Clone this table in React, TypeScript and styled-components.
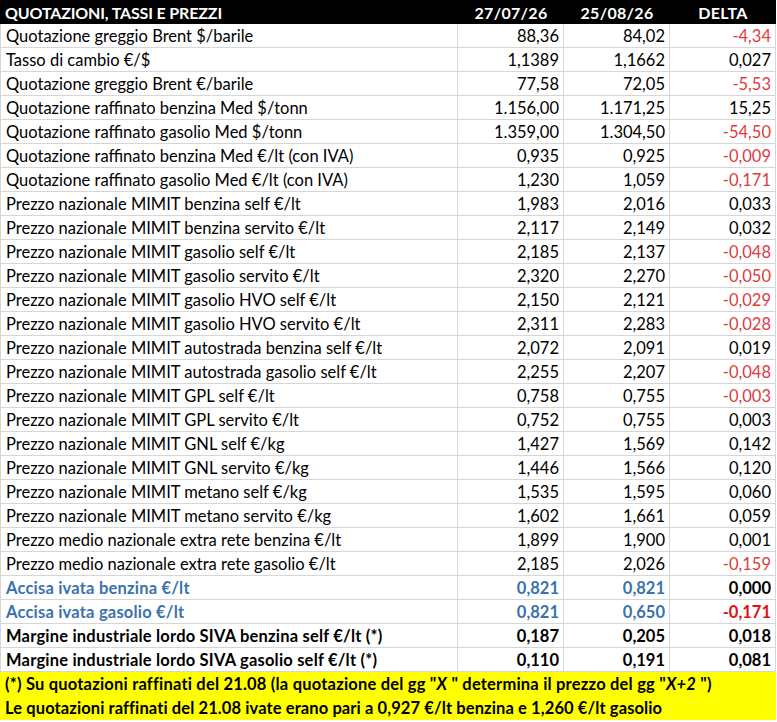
import React from "react"
import styled, { createGlobalStyle } from "styled-components"

const GlobalStyle = createGlobalStyle`
  body {
    margin: 0;
    background: #ffffff;
    font-family: 'Lato', 'Liberation Sans', sans-serif;
  }
`

type Tone = "normal" | "blue" | "bold"
type Row = { label: string, a: string, b: string, d: string, tone?: Tone }

const rows: Row[] = [
  { label: "Quotazione greggio Brent $/barile", a: "88,36", b: "84,02", d: "-4,34" },
  { label: "Tasso di cambio €/$", a: "1,1389", b: "1,1662", d: "0,027" },
  { label: "Quotazione greggio Brent €/barile", a: "77,58", b: "72,05", d: "-5,53" },
  { label: "Quotazione raffinato benzina Med $/tonn", a: "1.156,00", b: "1.171,25", d: "15,25" },
  { label: "Quotazione raffinato gasolio Med $/tonn", a: "1.359,00", b: "1.304,50", d: "-54,50" },
  { label: "Quotazione raffinato benzina Med €/lt (con IVA)", a: "0,935", b: "0,925", d: "-0,009" },
  { label: "Quotazione raffinato gasolio Med €/lt (con IVA)", a: "1,230", b: "1,059", d: "-0,171" },
  { label: "Prezzo nazionale MIMIT benzina self €/lt", a: "1,983", b: "2,016", d: "0,033" },
  { label: "Prezzo nazionale MIMIT benzina servito €/lt", a: "2,117", b: "2,149", d: "0,032" },
  { label: "Prezzo nazionale MIMIT gasolio self €/lt", a: "2,185", b: "2,137", d: "-0,048" },
  { label: "Prezzo nazionale MIMIT gasolio servito €/lt", a: "2,320", b: "2,270", d: "-0,050" },
  { label: "Prezzo nazionale MIMIT gasolio HVO self €/lt", a: "2,150", b: "2,121", d: "-0,029" },
  { label: "Prezzo nazionale MIMIT gasolio HVO servito €/lt", a: "2,311", b: "2,283", d: "-0,028" },
  { label: "Prezzo nazionale MIMIT autostrada benzina self €/lt", a: "2,072", b: "2,091", d: "0,019" },
  { label: "Prezzo nazionale MIMIT autostrada gasolio self €/lt", a: "2,255", b: "2,207", d: "-0,048" },
  { label: "Prezzo nazionale MIMIT GPL self €/lt", a: "0,758", b: "0,755", d: "-0,003" },
  { label: "Prezzo nazionale MIMIT GPL servito €/lt", a: "0,752", b: "0,755", d: "0,003" },
  { label: "Prezzo nazionale MIMIT GNL self €/kg", a: "1,427", b: "1,569", d: "0,142" },
  { label: "Prezzo nazionale MIMIT GNL servito €/kg", a: "1,446", b: "1,566", d: "0,120" },
  { label: "Prezzo nazionale MIMIT metano self €/kg", a: "1,535", b: "1,595", d: "0,060" },
  { label: "Prezzo nazionale MIMIT metano servito €/kg", a: "1,602", b: "1,661", d: "0,059" },
  { label: "Prezzo medio nazionale extra rete benzina €/lt", a: "1,899", b: "1,900", d: "0,001" },
  { label: "Prezzo medio nazionale extra rete gasolio €/lt", a: "2,185", b: "2,026", d: "-0,159" },
  { label: "Accisa ivata benzina €/lt", a: "0,821", b: "0,821", d: "0,000", tone: "blue" },
  { label: "Accisa ivata gasolio €/lt", a: "0,821", b: "0,650", d: "-0,171", tone: "blue" },
  { label: "Margine industriale lordo SIVA benzina self €/lt (*)", a: "0,187", b: "0,205", d: "0,018", tone: "bold" },
  { label: "Margine industriale lordo SIVA gasolio self €/lt (*)", a: "0,110", b: "0,191", d: "0,081", tone: "bold" },
]

function App() {
  return (
    <Sheet>
      <GlobalStyle />
      <HeadCell>QUOTAZIONI, TASSI E PREZZI</HeadCell>
      <HeadCell $center>27/07/26</HeadCell>
      <HeadCell $center>25/08/26</HeadCell>
      <HeadCell $center>DELTA</HeadCell>
      {rows.map((row, index) => {
        const tone = row.tone || "normal"
        const negative = row.d.startsWith("-")
        return (
          <React.Fragment key={index}>
            <Cell $tone={tone} $first>{row.label}</Cell>
            <Cell $tone={tone} $num>{row.a}</Cell>
            <Cell $tone={tone} $num>{row.b}</Cell>
            <DeltaCell $tone={tone} $num $negative={negative}>{row.d}</DeltaCell>
          </React.Fragment>
        )
      })}
      <Note $spacing={0.2}>
        (*) Su quotazioni raffinati del 21.08 (la quotazione del gg "<Em>X</Em> " determina il prezzo del gg "<Em>X+2</Em> ")
      </Note>
      <Note $spacing={0.1}>Le quotazioni raffinati del 21.08 ivate erano pari a 0,927 €/lt benzina e 1,260 €/lt gasolio</Note>
    </Sheet>
  )
}

const Sheet = styled.div`
  display: grid;
  grid-template-columns: 458px 106px 106px 106px;
  grid-auto-rows: 24px;
  width: 776px;
  font-size: 16.5px;
  color: #000000;
`

const HeadCell = styled.div<{ $center?: boolean }>`
  background: #000000;
  color: #ffffff;
  font-weight: 700;
  font-size: 16px;
  letter-spacing: ${(p) => (p.$center ? "0.3px" : "-0.15px")};
  display: flex;
  align-items: center;
  justify-content: ${(p) => (p.$center ? "center" : "flex-start")};
  padding: 0 5px;
  white-space: nowrap;
`

const Cell = styled.div<{ $tone: Tone, $num?: boolean, $first?: boolean }>`
  display: flex;
  align-items: center;
  justify-content: ${(p) => (p.$num ? "flex-end" : "flex-start")};
  padding: ${(p) => (p.$num ? "0 4px 0 0" : "0 0 0 5px")};
  border-right: 1px solid #d6d6d6;
  border-bottom: 1px solid #d6d6d6;
  border-left: ${(p) => (p.$first ? "1px solid #d6d6d6" : "none")};
  white-space: nowrap;
  color: ${(p) => (p.$tone === "blue" ? "#3a72ad" : "#000000")};
  font-weight: ${(p) => (p.$tone === "normal" ? 400 : 700)};
  letter-spacing: ${(p) => (p.$tone === "normal" || p.$num ? "0" : "0.2px")};
`

const DeltaCell = styled(Cell)<{ $negative: boolean }>`
  color: ${(p) =>
    p.$negative ? (p.$tone === "normal" ? "#de3c40" : "#e01010") : "#000000"};
`

const Note = styled.div<{ $spacing: number }>`
  grid-column: 1 / -1;
  background: #ffff00;
  font-weight: 700;
  letter-spacing: ${(p) => p.$spacing}px;
  display: flex;
  align-items: center;
  padding: 0 5px;
  white-space: pre;
`

const Em = styled.span`
  font-style: italic;
`

export default App
